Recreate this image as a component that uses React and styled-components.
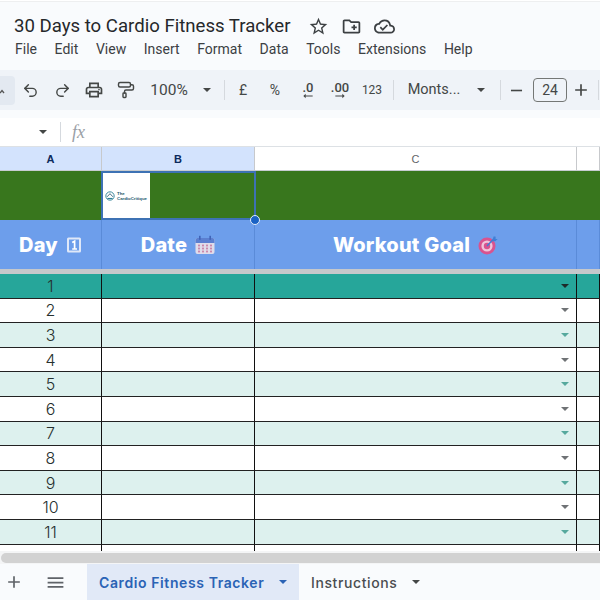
import React from "react";
import styled, { createGlobalStyle } from "styled-components";
import {
  MdStarBorder,
  MdOutlineCreateNewFolder,
  MdOutlineCloudDone,
  MdOutlinePrint,
  MdAdd,
  MdRemove,
  MdMenu,
  MdArrowRightAlt,
} from "react-icons/md";
import { Undo2, Redo2, PaintRoller } from "lucide-react";

const GlobalStyle = createGlobalStyle`
  html, body { margin: 0; padding: 0; background: #f9fbfd; }
  body { font-family: "Roboto", "Liberation Sans", sans-serif; }
`;

const Page = styled.div`
  width: 600px;
  height: 600px;
  overflow: hidden;
  display: flex;
  flex-direction: column;
  background: #f9fbfd;
  color: #3c4043;
`;

const TopEdge = styled.div`
  height: 2px;
  background: #eeeff0;
  border-top: 1px solid #fff;
  box-sizing: border-box;
  flex-shrink: 0;
`;

const TitleRow = styled.div`
  height: 26px;
  margin-top: 11px;
  padding-left: 14px;
  display: flex;
  align-items: center;
  gap: 11px;
  flex-shrink: 0;
`;

const Title = styled.div`
  font-family: "Roboto", sans-serif;
  font-size: 18.6px;
  color: #26282b;
  margin-right: 6px;
  white-space: nowrap;
`;

const TitleIcon = styled.span`
  width: 22px;
  display: flex;
  justify-content: center;
  color: #3c4043;
  font-size: 21px;
`;

const MenuRow = styled.div`
  display: flex;
  gap: 17.6px;
  height: 20px;
  padding-left: 15px;
  align-items: center;
  font-size: 14px;
  color: #3c4043;
  flex-shrink: 0;
`;

const Toolbar = styled.div`
  margin-top: 11px;
  height: 40px;
  background: #eff3f8;
  display: flex;
  align-items: center;
  flex-shrink: 0;
  overflow: hidden;
`;

const ActiveStub = styled.div`
  width: 15px;
  height: 29px;
  background: #e3e9f1;
  border-radius: 0 4px 4px 0;
  flex-shrink: 0;
  margin-right: -1px;
  display: flex;
  align-items: center;
`;

const ToolButton = styled.div`
  width: ${(p) => p.$w || 32}px;
  flex-shrink: 0;
  display: flex;
  justify-content: center;
  align-items: center;
  color: #444746;
  font-size: ${(p) => p.$size || 20}px;
`;

const ToolText = styled.div`
  width: ${(p) => p.$w}px;
  flex-shrink: 0;
  text-align: center;
  font-size: ${(p) => p.$size || 14}px;
  color: #444746;
  line-height: 16px;
`;

const DecimalBox = styled.div`
  width: ${(p) => p.$w}px;
  flex-shrink: 0;
  display: flex;
  flex-direction: column;
  align-items: center;
  font-size: 13px;
  font-weight: 500;
  line-height: 11px;
  color: #444746;
  svg {
    margin-top: -4px;
    margin-bottom: -5px;
    transform: ${(p) => (p.$left ? "scaleX(-1)" : "none")};
  }
`;

const Caret = styled.span`
  display: inline-block;
  width: 0;
  height: 0;
  border-left: ${(p) => p.$r || 4}px solid transparent;
  border-right: ${(p) => p.$r || 4}px solid transparent;
  border-top: ${(p) => p.$r || 4}px solid ${(p) => p.$color || "#444746"};
`;

const CaretSlot = styled.div`
  width: ${(p) => p.$w}px;
  flex-shrink: 0;
  display: flex;
  justify-content: center;
`;

const Divider = styled.div`
  width: 1px;
  height: 20px;
  background: #d5d9de;
  flex-shrink: 0;
  margin: 0 ${(p) => p.$m || 0}px;
`;

const SizeBox = styled.div`
  width: 32px;
  height: 22px;
  flex-shrink: 0;
  margin-left: 6px;
  border: 1px solid #747775;
  border-radius: 4px;
  font-size: 14px;
  text-align: center;
  line-height: 22px;
  color: #444746;
`;

const FormulaBar = styled.div`
  margin-top: 8px;
  height: 29px;
  background: #fff;
  display: flex;
  align-items: center;
  flex-shrink: 0;
  border-bottom: 1px solid #dde1e5;
  box-sizing: border-box;
`;

const NameCaret = styled.div`
  width: 60px;
  padding-left: 39px;
  box-sizing: border-box;
  display: flex;
  align-items: center;
  flex-shrink: 0;
`;

const Fx = styled.span`
  font-family: "Liberation Serif", serif;
  font-style: italic;
  font-size: 18px;
  color: #9aa0a6;
  margin-left: 11px;
`;

const Sheet = styled.div`
  position: relative;
  height: 404px;
  overflow: hidden;
  background: #fff;
  flex-shrink: 0;
`;

const Row = styled.div`
  display: grid;
  grid-template-columns: 102px 153px 322px 1fr;
  height: ${(p) => p.$h}px;
  box-sizing: border-box;
`;

const ColHead = styled.div`
  display: flex;
  align-items: center;
  justify-content: center;
  font-family: "Liberation Sans", sans-serif;
  font-size: 11px;
  font-weight: ${(p) => (p.$active ? 700 : 400)};
  color: ${(p) => (p.$active ? "#0b2a5c" : "#5f6368")};
  background: ${(p) => (p.$active ? "#d3e3fd" : "#fff")};
  border-right: 1px solid #c7c9cc;
  border-bottom: 1px solid #c7ccd0;
`;

const Banner = styled.div`
  background: #38761d;
  display: flex;
`;

const LogoBox = styled.div`
  width: 48px;
  height: 47px;
  margin-top: 1px;
  background: #fff;
  display: flex;
  align-items: center;
  justify-content: center;
  gap: 2px;
`;

const LogoText = styled.div`
  font-family: "Liberation Sans", sans-serif;
  font-size: 4.3px;
  line-height: 5px;
  font-weight: 700;
  color: #23566a;
  white-space: nowrap;
`;

const Selection = styled.div`
  position: absolute;
  left: 101px;
  top: 24px;
  width: 155px;
  height: 49px;
  box-sizing: border-box;
  border: 2px solid #3d72b4;
  pointer-events: none;
`;

const Handle = styled.div`
  position: absolute;
  left: 249.5px;
  top: 68px;
  width: 10px;
  height: 10px;
  box-sizing: border-box;
  border-radius: 50%;
  background: #1a62c4;
  border: 1px solid #e3edf9;
`;

const HeadCell = styled.div`
  background: #6d9eeb;
  border-right: 1px solid #5a8bd8;
  display: flex;
  align-items: center;
  justify-content: center;
  gap: 8px;
  font-family: "Inter", "Open Sans", sans-serif;
  font-weight: 800;
  font-size: 20px;
  letter-spacing: 0.2px;
  color: #fff;
  white-space: nowrap;
`;

const FreezeBar = styled.div`
  height: 5px;
  background: #c6c8cb;
  border-top: 1px solid #1c1c1c;
  box-sizing: content-box;
  margin-top: -1px;
`;

const Cell = styled.div`
  position: relative;
  background: ${(p) => p.$bg};
  border-right: 1.5px solid #111;
  border-bottom: 1.5px solid #222;
  box-sizing: border-box;
  display: flex;
  align-items: center;
  justify-content: ${(p) => (p.$num ? "center" : "flex-end")};
  padding-right: ${(p) => (p.$num ? 0 : 7)}px;
  font-family: "Inter", "Open Sans", sans-serif;
  font-weight: 300;
  font-size: 16px;
  color: #26302e;
`;

const TailCell = styled.div`
  border-right: 1.5px solid #111;
  background: #fff;
`;

const ScrollTrack = styled.div`
  height: 13px;
  background: #f4f5f6;
  display: flex;
  align-items: center;
  flex-shrink: 0;
`;

const ScrollThumb = styled.div`
  width: 100%;
  height: 10px;
  margin-left: 1px;
  border-radius: 5px 0 0 5px;
  background: #d2d2d2;
`;

const TabBar = styled.div`
  flex: 1;
  display: flex;
  align-items: stretch;
  background: #f9fbfd;
  color: #444746;
`;

const TabIcon = styled.div`
  width: ${(p) => p.$w}px;
  flex-shrink: 0;
  display: flex;
  align-items: center;
  justify-content: center;
  font-size: ${(p) => p.$size || 20}px;
  color: #5f6368;
`;

const Tab = styled.div`
  width: ${(p) => p.$w}px;
  box-sizing: border-box;
  flex-shrink: 0;
  padding-left: 12px;
  display: flex;
  align-items: center;
  gap: 15px;
  font-family: "Inter", "Roboto", sans-serif;
  font-size: 14px;
  letter-spacing: 0.6px;
  font-weight: ${(p) => (p.$active ? 600 : 500)};
  color: ${(p) => (p.$active ? "#2a63b5" : "#4a4d50")};
  background: ${(p) => (p.$active ? "#e1e9f7" : "transparent")};
  white-space: nowrap;
`;

const days = [1, 2, 3, 4, 5, 6, 7, 8, 9, 10, 11];

const rowColor = (day) => {
  if (day === 1) return "#26a69a";
  return day % 2 ? "#ddf1ee" : "#fff";
};

const caretColor = (day) => {
  if (day === 1) return "#1d2b2a";
  return day % 2 ? "#56a99d" : "#6f7275";
};

const StubArrow = () => (
  <svg width="5" height="10" viewBox="0 0 5 10">
    <path d="M0 8 2 5.5 4 8" fill="none" stroke="#555" strokeWidth="1.3" />
  </svg>
);

const KeycapOne = () => (
  <svg width="16" height="18" viewBox="0 0 16 18">
    <rect x="1" y="1.5" width="14" height="15" rx="1.5" fill="#dfe8f8" />
    <rect x="3" y="3.5" width="10" height="11" fill="#6d9eeb" />
    <path d="M6.2 6.5 8.6 5.2v7.6M6.2 13h4.8" fill="none" stroke="#fff" strokeWidth="1.7" />
  </svg>
);

const CalendarIcon = () => (
  <svg width="20" height="20" viewBox="0 0 20 20">
    <rect x="0.5" y="3" width="19" height="16" rx="2" fill="#e0dcea" />
    <path d="M0.5 8V5a2 2 0 0 1 2-2h15a2 2 0 0 1 2 2v3z" fill="#5b7fd0" />
    <rect x="4" y="0.8" width="1.6" height="4" fill="#3f63b8" />
    <rect x="14.4" y="0.8" width="1.6" height="4" fill="#3f63b8" />
    {[4, 8, 12, 16].map((x) =>
      [10.5, 13.5, 16.5].map((y) => (
        <rect key={`${x}-${y}`} x={x - 0.9} y={y - 0.9} width="1.8" height="1.8" fill="#c2608f" opacity="0.75" />
      ))
    )}
  </svg>
);

const TargetIcon = () => (
  <svg width="20" height="20" viewBox="0 0 20 20">
    <circle cx="9" cy="11" r="8.5" fill="#d9538f" />
    <circle cx="9" cy="11" r="5.6" fill="#f0c4da" />
    <circle cx="9" cy="11" r="3.2" fill="#d9538f" />
    <path d="M9 11 17 2.5" stroke="#3f7fd6" strokeWidth="1.5" />
    <path d="M15.5 1.5h2v2.5h2.2l-2.5 2.3h-2.4z" fill="#3f7fd6" />
  </svg>
);

const LogoMark = () => (
  <svg width="10" height="10" viewBox="0 0 12 12">
    <circle cx="6" cy="6" r="5" fill="none" stroke="#2c7f95" strokeWidth="1.1" />
    <path d="M2.5 7 6 3.2 9.5 7" fill="none" stroke="#23566a" strokeWidth="1" />
    <path d="M3 9h6" stroke="#2c7f95" strokeWidth="1.4" />
  </svg>
);

export default function App() {
  return (
    <Page>
      <GlobalStyle />
      <TopEdge />
      <TitleRow>
        <Title>30 Days to Cardio Fitness Tracker</Title>
        <TitleIcon><MdStarBorder /></TitleIcon>
        <TitleIcon><MdOutlineCreateNewFolder /></TitleIcon>
        <TitleIcon><MdOutlineCloudDone /></TitleIcon>
      </TitleRow>
      <MenuRow>
        {["File", "Edit", "View", "Insert", "Format", "Data", "Tools", "Extensions", "Help"].map((m) => (
          <span key={m}>{m}</span>
        ))}
      </MenuRow>

      <Toolbar>
        <ActiveStub><StubArrow /></ActiveStub>
        <ToolButton><Undo2 size={17} strokeWidth={2} /></ToolButton>
        <ToolButton><Redo2 size={17} strokeWidth={2} /></ToolButton>
        <ToolButton><MdOutlinePrint /></ToolButton>
        <ToolButton><PaintRoller size={18} strokeWidth={1.9} /></ToolButton>
        <ToolText $w={54} $size={15.5}>100%</ToolText>
        <CaretSlot $w={22}><Caret /></CaretSlot>
        <Divider $m={6} />
        <ToolText $w={24} $size={14}>£</ToolText>
        <ToolText $w={40} $size={14}>%</ToolText>
        <DecimalBox $left $w={26}>.0<MdArrowRightAlt size={14} /></DecimalBox>
        <DecimalBox $w={38}>.00<MdArrowRightAlt size={14} /></DecimalBox>
        <ToolText $w={26} $size={12}>123</ToolText>
        <Divider $m={8} />
        <ToolText $w={64} $size={14.5}>Monts...</ToolText>
        <CaretSlot $w={30}><Caret /></CaretSlot>
        <Divider $m={4} />
        <ToolButton $w={22} $size={19}><MdRemove /></ToolButton>
        <SizeBox>24</SizeBox>
        <ToolButton $w={28} $size={20}><MdAdd /></ToolButton>
        <Divider $m={3} />
      </Toolbar>

      <FormulaBar>
        <NameCaret><Caret /></NameCaret>
        <Divider />
        <Fx>fx</Fx>
      </FormulaBar>

      <Sheet>
        <Row $h={24}>
          <ColHead $active>A</ColHead>
          <ColHead $active>B</ColHead>
          <ColHead>C</ColHead>
          <ColHead />
        </Row>
        <Row $h={49}>
          <Banner />
          <Banner><LogoBox><LogoMark /><LogoText>The<br />CardioCritique</LogoText></LogoBox></Banner>
          <Banner />
          <Banner />
        </Row>
        <Row $h={49}>
          <HeadCell>Day <KeycapOne /></HeadCell>
          <HeadCell>Date <CalendarIcon /></HeadCell>
          <HeadCell>Workout Goal <TargetIcon /></HeadCell>
          <HeadCell />
        </Row>
        <FreezeBar />
        {days.map((d) => (
          <Row key={d} $h={24.6}>
            <Cell $num $bg={rowColor(d)}>{d}</Cell>
            <Cell $bg={rowColor(d)} />
            <Cell $bg={rowColor(d)}><Caret $color={caretColor(d)} /></Cell>
            <Cell $bg={rowColor(d)} />
          </Row>
        ))}
        <Row $h={10}>
          <TailCell />
          <TailCell />
          <TailCell />
          <TailCell />
        </Row>
        <Selection />
        <Handle />
      </Sheet>

      <ScrollTrack><ScrollThumb /></ScrollTrack>

      <TabBar>
        <TabIcon $w={28} $size={20}><MdAdd /></TabIcon>
        <TabIcon $w={54} $size={21}><MdMenu /></TabIcon>
        <TabIcon $w={5} />
        <Tab $active $w={212}>Cardio Fitness Tracker <Caret $color="#2a63b5" /></Tab>
        <Tab $w={160}>Instructions <Caret /></Tab>
      </TabBar>
    </Page>
  );
}
